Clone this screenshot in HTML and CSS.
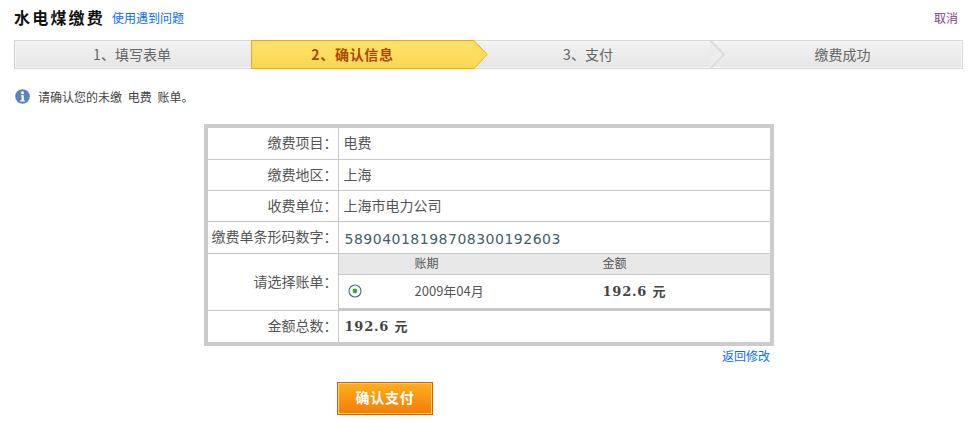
FILE: index.html
```html
<!DOCTYPE html>
<html lang="zh-CN">
<head>
<meta charset="utf-8">
<title>水电煤缴费</title>
<link rel="stylesheet" href="styles.css">
</head>
<body>
<div class="page">
  <header class="top">
    <h1 class="title">水电煤缴费</h1>
    <a class="help" href="#">使用遇到问题</a>
    <a class="cancel" href="#">取消</a>
  </header>
  <ol class="steps">
    <li class="step step-first">1、填写表单</li>
    <li class="step step-active">2、确认信息
      <svg class="arrow" width="15" height="29" viewBox="0 0 15 29"><path d="M0 0.5L1 0.5L14 14.5L1 28.5L0 28.5" fill="#fbdc5c" stroke="#f5a800"/></svg>
    </li>
    <li class="step step-third">3、支付
      <svg class="arrow-grey" width="16" height="29" viewBox="0 0 16 29"><path d="M0 0L14 14.5L0 29" fill="#ececec" stroke="#dcdcdc" stroke-width="2"/></svg>
    </li>
    <li class="step step-last">缴费成功</li>
  </ol>
  <p class="notice">
    <svg class="info" width="15" height="15" viewBox="0 0 14 14"><circle cx="7" cy="7" r="6.8" fill="#5b82c0"/><circle cx="7" cy="3.6" r="1.4" fill="#fff"/><path d="M5.5 5.8H8.2V10.6H9.2V11.6H5V10.6H6.1V6.8H5.5Z" fill="#fff"/></svg>
    <span>请确认您的未缴 电费 账单。</span>
  </p>
  <div class="panel">
    <table class="bill">
      <tr class="r1"><th>缴费项目：</th><td>电费</td></tr>
      <tr class="r2"><th>缴费地区：</th><td>上海</td></tr>
      <tr class="r3"><th>收费单位：</th><td>上海市电力公司</td></tr>
      <tr class="r4"><th>缴费单条形码数字：</th><td class="code">58904018198708300192603</td></tr>
      <tr class="r5"><th>请选择账单：</th>
        <td class="nested">
          <table class="inner">
            <tr class="head"><th class="c1"></th><th class="c2">账期</th><th class="c3">金额</th></tr>
            <tr class="row">
              <td class="c1"><svg width="14" height="14" viewBox="0 0 14 14"><circle cx="7" cy="7" r="6" fill="#fff" stroke="#4a6a92" stroke-width="1.1"/><circle cx="7" cy="7" r="2.4" fill="#3cab35"/></svg></td>
              <td class="c2">2009年04月</td>
              <td class="c3 amount">192.6 元</td>
            </tr>
          </table>
        </td>
      </tr>
      <tr class="r6"><th>金额总数：</th><td class="total">192.6 元</td></tr>
    </table>
  </div>
  <div class="back-row"><a class="help" href="#">返回修改</a></div>
  <div class="submit-row"><button class="pay" type="button">确认支付</button></div>
</div>
</body>
</html>
```
FILE: styles.css
```css
* { box-sizing: border-box; }
html, body { margin: 0; padding: 0; background: #fff; }
body {
  width: 972px;
  height: 430px;
  overflow: hidden;
  font-family: "Noto Sans CJK SC", "Liberation Sans", sans-serif;
  font-size: 12px;
  color: #444;
}
.page { padding: 0 9px 0 14px; }
.top {
  display: flex;
  align-items: center;
  height: 40px;
  padding-bottom: 6px;
}
.title { margin: 0; font-size: 16px; font-weight: 700; color: #111; letter-spacing: 2.2px; line-height: 20px; }
.help { color: #0a6cf0; text-decoration: none; font-size: 12px; }
.top .help { margin-left: 7px; }
.cancel { margin-left: auto; margin-right: 5px; color: #7b3f8c; text-decoration: none; font-size: 12px; }
.steps {
  display: flex;
  list-style: none;
  margin: 0;
  padding: 0;
  width: 949px;
  height: 29px;
  border: 1px solid #d8d8d8;
  border-left-color: #ccc;
  background: linear-gradient(#f2f2f2, #e6e6e6);
  box-shadow: inset 0 0 0 1px #f8f8f8;
}
.step {
  position: relative;
  display: flex;
  align-items: center;
  justify-content: center;
  font-size: 14px;
  color: #666;
  line-height: 27px;
  padding-bottom: 1px;
}
.step-first { width: 236px; padding-right: 2px; }
.step-active {
  width: 222px;
  margin: -1px 0;
  height: 29px;
  color: #a8480a;
  font-weight: 700;
  letter-spacing: 0.7px;
  background: linear-gradient(#fde36c, #f9d750);
  border: 1px solid #f5a800;
  border-right: 0;
  padding-right: 20px;
}
.arrow { position: absolute; left: 100%; top: -1px; }
.step-third { width: 238px; padding-right: 8px; }
.arrow-grey { position: absolute; right: 0; top: -1px; transform: translateX(15px); }
.step-last { flex: 1; padding-left: 12px; }
.notice {
  display: flex;
  align-items: center;
  margin: 19px 0 0 1px;
  height: 16px;
  font-size: 12px;
  color: #444;
  word-spacing: 3px;
}
.info { margin-right: 8px; }
.panel {
  width: 570px;
  margin: 20px 0 0 190px;
  border: 4px solid #ccc;
  background: #fff;
}
.bill, .inner { border-collapse: collapse; width: 100%; table-layout: fixed; }
.bill > tbody > tr > th,
.bill > tbody > tr > td {
  border-bottom: 1px solid #c8c8c8;
  padding: 0 0 2px;
  font-size: 14px;
  font-weight: 400;
  color: #555;
}
.bill > tbody > tr:last-child > th,
.bill > tbody > tr:last-child > td { border-bottom: 0; }
.bill > tbody > tr > th {
  width: 130px;
  text-align: right;
  border-right: 1px solid #c8c8c8;
  white-space: nowrap;
}
.bill > tbody > tr > td { padding-left: 5px; }
.r1, .r2, .r3 { height: 31px; }
.r4 { height: 32px; }
.r5 { height: 57px; }
.r6 { height: 32px; }
.bill > tbody > tr > td.code {
  font-family: "DejaVu Sans", sans-serif;
  font-size: 14px;
  letter-spacing: 0.5px;
  color: #41606a;
  padding-top: 3px;
  padding-bottom: 0;
  padding-left: 6px;
}
.bill > tbody > tr > td.nested { padding: 0; vertical-align: top; }
.inner { height: 56px; }
.inner .head { height: 21px; background: #e8e8e8; }
.inner .head th { font-size: 12px; font-weight: 400; color: #555; text-align: left; border-bottom: 1px solid #c8c8c8; padding: 0 0 3px; }
.inner .row td { font-size: 13px; color: #555; padding: 0 0 2px; border-bottom: 2px solid #c8c8c8; }
.inner .c1 { width: 76px; padding-left: 9px !important; }
.inner .row .c1 svg { display: block; margin-top: 2px; }
.inner .c2 { width: 188px; }
.inner .row .amount,
.bill > tbody > tr > td.total {
  font-family: "DejaVu Serif", "Noto Sans CJK SC", serif;
  font-weight: 700;
  font-size: 13px;
  color: #444;
  letter-spacing: 0.8px;
}
.bill > tbody > tr > td.total { padding-left: 6px; }
.back-row { width: 566px; margin: 2px 0 0 190px; text-align: right; line-height: 16px; height: 16px; }
.submit-row { margin: 18px 0 0 323px; }
.pay {
  display: block;
  width: 96px;
  height: 33px;
  padding: 0 0 3px;
  border: 1px solid #d9600a;
  outline: 1px solid #ffd968;
  outline-offset: -2px;
  background: linear-gradient(#fbb01e, #f57c08);
  color: #fff;
  font-family: "Noto Sans CJK SC", sans-serif;
  font-weight: 700;
  font-size: 14px;
  letter-spacing: 0.8px;
}
```
